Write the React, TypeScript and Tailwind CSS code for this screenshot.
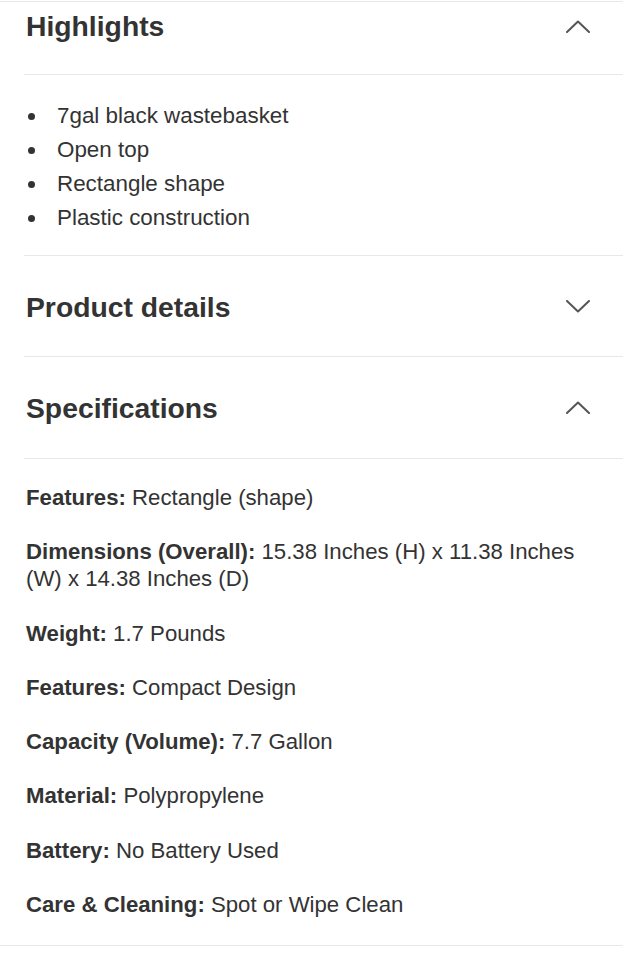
import React from 'react';

type Spec = { label: string; value: string };

const highlights = ['7gal black wastebasket', 'Open top', 'Rectangle shape', 'Plastic construction'];

const specs: Spec[] = [
  { label: 'Features:', value: 'Rectangle (shape)' },
  { label: 'Dimensions (Overall):', value: '15.38 Inches (H) x 11.38 Inches (W) x 14.38 Inches (D)' },
  { label: 'Weight:', value: '1.7 Pounds' },
  { label: 'Features:', value: 'Compact Design' },
  { label: 'Capacity (Volume):', value: '7.7 Gallon' },
  { label: 'Material:', value: 'Polypropylene' },
  { label: 'Battery:', value: 'No Battery Used' },
  { label: 'Care & Cleaning:', value: 'Spot or Wipe Clean' },
];

const Chevron = ({ up }: { up: boolean }) => (
  <svg width="24" height="13" viewBox="0 0 24 13" fill="none" className="shrink-0">
    <path
      d={up ? 'M1 12 L12 1.5 L23 12' : 'M1 1 L12 11.5 L23 1'}
      stroke="#555"
      strokeWidth="2"
      strokeLinecap="round"
      strokeLinejoin="round"
    />
  </svg>
);

const SectionHeader = ({ title, up, className }: { title: string; up: boolean; className: string }) => (
  <div className={`flex items-center justify-between pl-[2px] pr-[33px] ${className}`}>
    <h2 className="text-[28.3px] font-bold leading-[32px] text-[#333]">{title}</h2>
    <Chevron up={up} />
  </div>
);

export default function App() {
  return (
    <div
      className="min-h-[960px] bg-white text-[#333]"
      style={{ fontFamily: '"Liberation Sans", Arial, Helvetica, sans-serif' }}
    >
      <div className="h-px" />
      <div className="border-t border-[#e8e8e8]" />
      <div className="pl-6">
        <SectionHeader title="Highlights" up className="h-[72px] items-start pt-[8px] [&>svg]:mt-[10px]" />
        <div className="border-t border-[#e8e8e8]" />
        <ul className="pt-[24px] pb-[20px]">
          {highlights.map(item => (
            <li key={item} className="flex items-center text-[22.4px] leading-[34px]">
              <span className="ml-[4px] mr-[22px] h-[7px] w-[7px] rounded-full bg-[#333]" />
              {item}
            </li>
          ))}
        </ul>
        <div className="border-t border-[#e8e8e8]" />
        <SectionHeader title="Product details" up={false} className="h-[100px] pt-[1px]" />
        <div className="border-t border-[#e8e8e8]" />
        <SectionHeader title="Specifications" up className="h-[101px]" />
        <div className="border-t border-[#e8e8e8]" />
        <div className="flex flex-col gap-[27.3px] pl-[2px] pr-[40px] pt-[25px] pb-[27px]">
          {specs.map((spec, i) => (
            <p key={i} className="text-[22.2px] leading-[27px]">
              <span className="font-bold">{spec.label}</span> {spec.value}
            </p>
          ))}
        </div>
      </div>
      <div className="border-t border-[#e8e8e8]" />
    </div>
  );
}
